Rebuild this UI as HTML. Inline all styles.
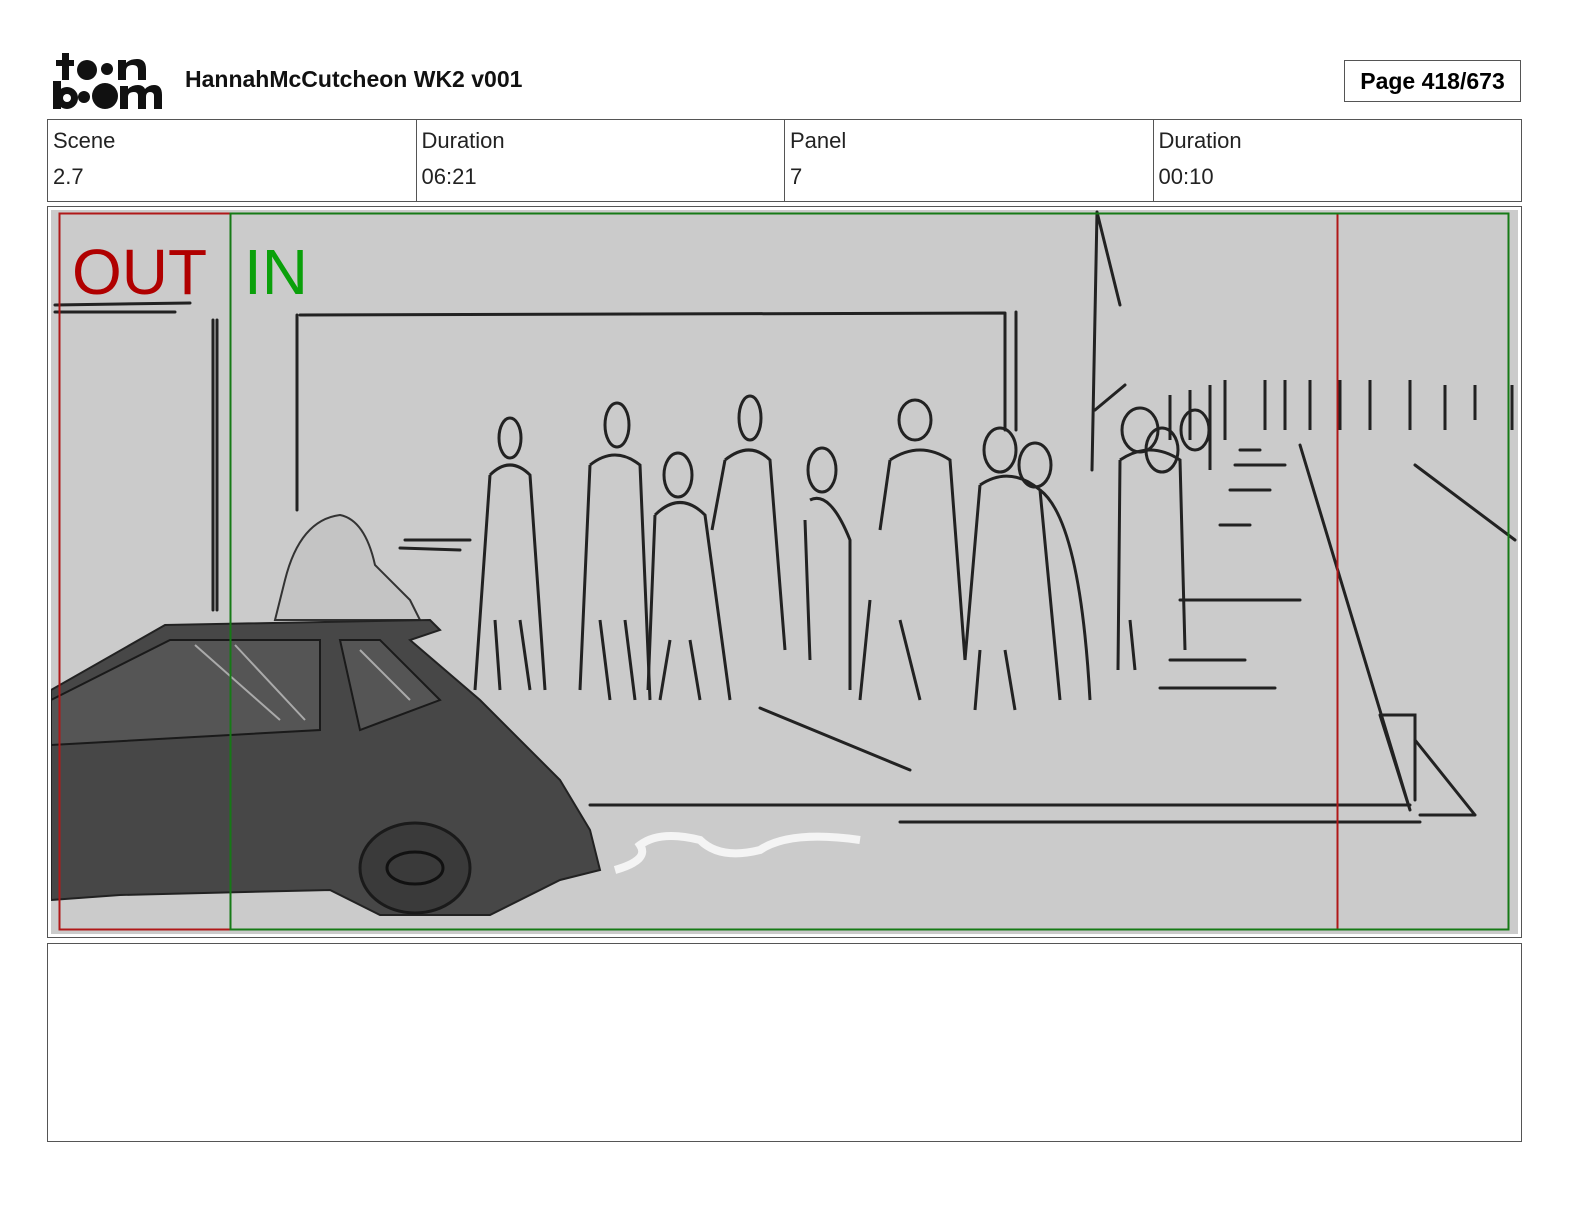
<!DOCTYPE html>
<html><head><style>
body{margin:0;width:1584px;height:1224px;background:#fff;position:relative;font-family:"Liberation Sans",sans-serif;overflow:hidden}
.abs{position:absolute}
.title{left:185px;top:66px;font-size:23px;font-weight:bold;color:#111}
.page{left:1344px;top:60px;width:177px;height:42px;border:1px solid #555;box-sizing:border-box;font-size:23px;font-weight:bold;text-align:center;line-height:41px}
.tbl{left:47px;top:119px;width:1475px;height:83px;border:1px solid #555;box-sizing:border-box;display:flex}
.tbl div{flex:1;border-left:1px solid #555;padding:3px 5px;font-size:22px;line-height:36px;color:#222}
.tbl div:first-child{border-left:none}
.panel{left:47px;top:206px;width:1475px;height:732px;border:1px solid #555;box-sizing:border-box}
.notes{left:47px;top:943px;width:1475px;height:199px;border:1px solid #555;box-sizing:border-box}
</style></head><body>
<svg class="abs" style="left:50px;top:50px" width="115" height="62" viewBox="0 0 115 62">
<g fill="#111">
<rect x="12" y="3" width="7" height="27"/><rect x="6" y="10" width="18" height="6"/>
<circle cx="37" cy="20" r="10"/><circle cx="57" cy="19" r="6"/>
<path d="M68 30 V10 H76 V13 Q80 9 87 9 Q96 9 96 19 V30 H88 V20 Q88 15 83 15 Q76 15 76 21 V30 Z"/>
<rect x="3" y="31" width="8" height="28"/><circle cx="17" cy="48" r="11"/><circle cx="17" cy="48" r="4" fill="#fff"/>
<circle cx="34" cy="47" r="6"/><circle cx="55" cy="46" r="13"/>
<path d="M70 59 V36 H78 V39 Q82 35 88 35 Q93 35 95 39 Q99 35 104 35 Q112 35 112 45 V59 H104 V46 Q104 42 100 42 Q96 42 96 47 V59 H88 V46 Q88 42 84 42 Q78 42 78 47 V59 Z"/>
</g></svg>
<div class="abs title">HannahMcCutcheon WK2 v001</div>
<div class="abs page">Page 418/673</div>
<div class="abs tbl"><div>Scene<br>2.7</div><div>Duration<br>06:21</div><div>Panel<br>7</div><div>Duration<br>00:10</div></div>
<div class="abs panel"></div>
<svg class="abs" style="left:51px;top:210px" width="1467" height="724" viewBox="51 210 1467 724">
<rect x="51" y="210" width="1467" height="724" fill="#cbcbcb"/>
<g fill="none" stroke="#222" stroke-width="3" stroke-linecap="round">
<path d="M300 315 L1005 313 M1005 313 V430 M1016 312 V430 M297 315 V510 M213 320 V610 M217 320 V610"/>
<path d="M55 305 L190 303 M55 312 L175 312"/>
<path d="M1097 212 L1092 470 M1097 212 L1120 305 M1095 410 L1125 385 M1300 445 L1410 810 M1415 465 L1515 540 M1380 715 H1415 V800 M1380 715 L1410 810 M1415 740 L1475 815 M1420 815 H1475"/>
<path d="M590 805 H1410 M900 822 H1420 M760 708 L910 770"/>
<path d="M1160 688 H1275 M1170 660 H1245 M1180 600 H1300 M1220 525 H1250 M1230 490 H1270 M1235 465 H1285 M1240 450 H1260"/>
<path d="M405 540 L470 540 M400 548 L460 550"/>
</g>
<g fill="none" stroke="#222" stroke-width="3">
<ellipse cx="510" cy="438" rx="11" ry="20"/><path d="M490 475 Q510 455 530 475 L545 690 M490 475 L475 690 M495 620 L500 690 M520 620 L530 690"/>
<ellipse cx="617" cy="425" rx="12" ry="22"/><path d="M590 465 Q615 445 640 465 L650 700 M590 465 L580 690 M600 620 L610 700 M625 620 L635 700"/>
<ellipse cx="678" cy="475" rx="14" ry="22"/><path d="M655 515 Q680 490 705 515 L730 700 M655 515 L648 690 M670 640 L660 700 M690 640 L700 700"/>
<ellipse cx="750" cy="418" rx="11" ry="22"/><path d="M725 460 Q750 440 770 460 L785 650 M725 460 L712 530"/>
<ellipse cx="822" cy="470" rx="14" ry="22"/><path d="M810 500 Q830 490 850 540 L850 690 M805 520 L810 660"/>
<ellipse cx="915" cy="420" rx="16" ry="20"/><path d="M890 460 Q920 440 950 460 L965 660 M890 460 L880 530 M870 600 L860 700 M900 620 L920 700"/>
<ellipse cx="1000" cy="450" rx="16" ry="22"/><path d="M980 485 Q1010 465 1040 490 L1060 700 M980 485 L965 660 M980 650 L975 710 M1005 650 L1015 710"/>
<ellipse cx="1035" cy="465" rx="16" ry="22"/><path d="M1040 490 Q1080 520 1090 700"/>
<ellipse cx="1140" cy="430" rx="18" ry="22"/><path d="M1120 460 Q1150 440 1180 460 L1185 650 M1120 460 L1118 670 M1130 620 L1135 670"/>
<ellipse cx="1162" cy="450" rx="16" ry="22"/><ellipse cx="1195" cy="430" rx="14" ry="20"/>
<path d="M1170 395 V440 M1190 390 V440 M1210 385 V470 M1225 380 V440 M1265 380 V430 M1285 380 V430 M1310 380 V430 M1340 380 V430 M1370 380 V430 M1410 380 V430 M1445 385 V430 M1475 385 V420 M1512 385 V430"/>
</g>
<g fill="#c4c4c4" stroke="#333" stroke-width="2"><path d="M285 580 Q300 520 340 515 Q365 520 375 565 L410 600 L420 620 L275 620 Z"/></g>
<path d="M51 690 L165 625 L430 620 L440 630 L410 640 L480 700 L560 780 L590 830 L600 870 L560 880 L490 915 L380 915 L330 890 L120 895 L51 900 Z" fill="#474747" stroke="#222" stroke-width="2"/>
<path d="M51 700 L170 640 L320 640 L320 730 L51 745 Z M340 640 L380 640 L440 700 L360 730 Z" fill="#555" stroke="#1a1a1a" stroke-width="2"/>
<path d="M195 645 L280 720 M235 645 L305 720 M360 650 L410 700" stroke="#aaa" stroke-width="2"/>
<ellipse cx="415" cy="868" rx="55" ry="45" fill="#3a3a3a" stroke="#1a1a1a" stroke-width="3"/>
<ellipse cx="415" cy="868" rx="28" ry="16" fill="none" stroke="#111" stroke-width="3"/>
<path d="M615 870 Q650 860 640 845 Q660 830 700 840 Q720 860 760 850 Q790 830 860 840" fill="none" stroke="#f4f4f4" stroke-width="8"/>
<rect x="59.5" y="213.5" width="1278" height="716" fill="none" stroke="#b01818" stroke-width="2"/>
<rect x="230.5" y="213.5" width="1278" height="716" fill="none" stroke="#167a16" stroke-width="2"/>
<text x="72" y="294" font-family="Liberation Sans" font-size="64" fill="#b00000">OUT</text>
<text x="244" y="294" font-family="Liberation Sans" font-size="64" fill="#0aa00a">IN</text>
</svg>
<div class="abs notes"></div>
</body></html>
